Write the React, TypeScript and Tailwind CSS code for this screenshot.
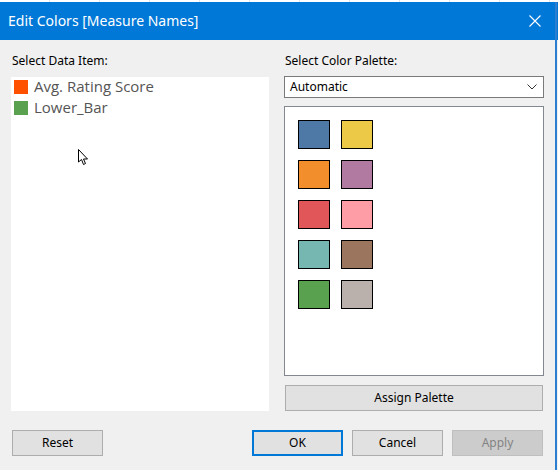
import React from "react";

const swatches: [string, string][] = [
  ["#4e79a7", "#edc948"],
  ["#f28e2b", "#b07aa1"],
  ["#e15759", "#ff9da7"],
  ["#76b7b2", "#9c755f"],
  ["#59a14f", "#bab0ac"],
];

const font = { fontFamily: '"Noto Sans", "Open Sans", sans-serif' };

export default function App() {
  return (
    <div
      className="relative w-[558px] h-[470px] bg-[#f0f0f0] flex flex-col overflow-hidden text-[#000]"
      style={font}
    >
      {/* background strip */}
      <div className="h-[2px] bg-white flex">
        {Array.from({ length: 11 }).map((_, i) => (
          <div key={i} className="w-[50px] h-full border-r border-[#e6e6e6]" />
        ))}
      </div>
      {/* title bar */}
      <div className="h-[38px] bg-[#0078d7] flex items-center justify-between pl-[8px] pr-[16px]">
        <span className="text-white text-[14px] leading-none">Edit Colors [Measure Names]</span>
        <svg width="12" height="12" viewBox="0 0 12 12" className="mr-[1px]">
          <path d="M0.5 0.5 L11.5 11.5 M11.5 0.5 L0.5 11.5" stroke="#fff" strokeWidth="1.1" />
        </svg>
      </div>
      <div className="absolute right-[1px] top-[2px] bottom-0 w-[2px] bg-[#2b7fd0]" />

      {/* body */}
      <div className="flex pl-[11px] pt-[13px] gap-[15px]">
        <div className="flex flex-col w-[258px]">
          <div className="text-[12px] leading-[16px] pl-[1px]">Select Data Item:</div>
          <div className="mt-[8px] h-[334px] bg-white flex flex-col pl-[3px]">
            <div className="flex items-center h-[21px] gap-[6px] -mt-[1px]">
              <div className="w-[14px] h-[14px] bg-[#ff5000]" />
              <span className="text-[15px] text-[#555555] leading-none" style={{ fontFamily: '"Open Sans", sans-serif' }}>Avg. Rating Score</span>
            </div>
            <div className="flex items-center h-[21px] gap-[6px]">
              <div className="w-[14px] h-[14px] bg-[#59a14f]" />
              <span className="text-[15px] text-[#555555] leading-none" style={{ fontFamily: '"Open Sans", sans-serif' }}>Lower_Bar</span>
            </div>
          </div>
        </div>
        <div className="flex flex-col w-[260px]">
          <div className="text-[12px] leading-[16px] pl-[1px]">Select Color Palette:</div>
          <div className="mt-[7px] h-[22px] bg-white border border-[#7a7a7a] flex items-center justify-between pl-[5px] pr-[6px]">
            <span className="text-[12px] leading-none">Automatic</span>
            <svg width="10" height="6" viewBox="0 0 10 6">
              <path d="M0.5 0.5 L5 5 L9.5 0.5" stroke="#333" strokeWidth="1" fill="none" />
            </svg>
          </div>
          <div className="mt-[8px] h-[270px] bg-white border border-[#828790] pt-[13px] pl-[13px] flex flex-col gap-[11px]">
            {swatches.map((row, i) => (
              <div key={i} className="flex gap-[11px]">
                {row.map((c) => (
                  <div key={c} className="w-[32px] h-[29px] border border-black" style={{ backgroundColor: c }} />
                ))}
              </div>
            ))}
          </div>
          <div className="mt-[9px] h-[26px] ml-[1px] mr-[1px] bg-[#e1e1e1] border border-[#adadad] flex items-center justify-center text-[12px]">
            Assign Palette
          </div>
        </div>
      </div>

      {/* bottom buttons */}
      <div className="flex mt-[19px] pl-[12px]">
        <div className="w-[91px] h-[26px] bg-[#e1e1e1] border border-[#adadad] flex items-center justify-center text-[12px]">Reset</div>
        <div className="ml-[149px] w-[91px] h-[26px] bg-[#e1e1e1] border-2 border-[#0078d7] flex items-center justify-center text-[12px]">OK</div>
        <div className="ml-[9px] w-[91px] h-[26px] bg-[#e1e1e1] border border-[#adadad] flex items-center justify-center text-[12px]">Cancel</div>
        <div className="ml-[9px] w-[91px] h-[26px] bg-[#cccccc] border border-[#bfbfbf] flex items-center justify-center text-[12px] text-[#838383]">Apply</div>
      </div>

      {/* mouse cursor */}
      <svg className="absolute left-[78px] top-[149px]" width="11" height="17" viewBox="0 0 11 17">
        <path d="M0.5 0.5 L0.5 13 L3.5 10.5 L5.5 15.5 L7.5 14.5 L5.5 10 L9.5 10 Z" fill="#fff" stroke="#000" strokeWidth="1" />
      </svg>
    </div>
  );
}
